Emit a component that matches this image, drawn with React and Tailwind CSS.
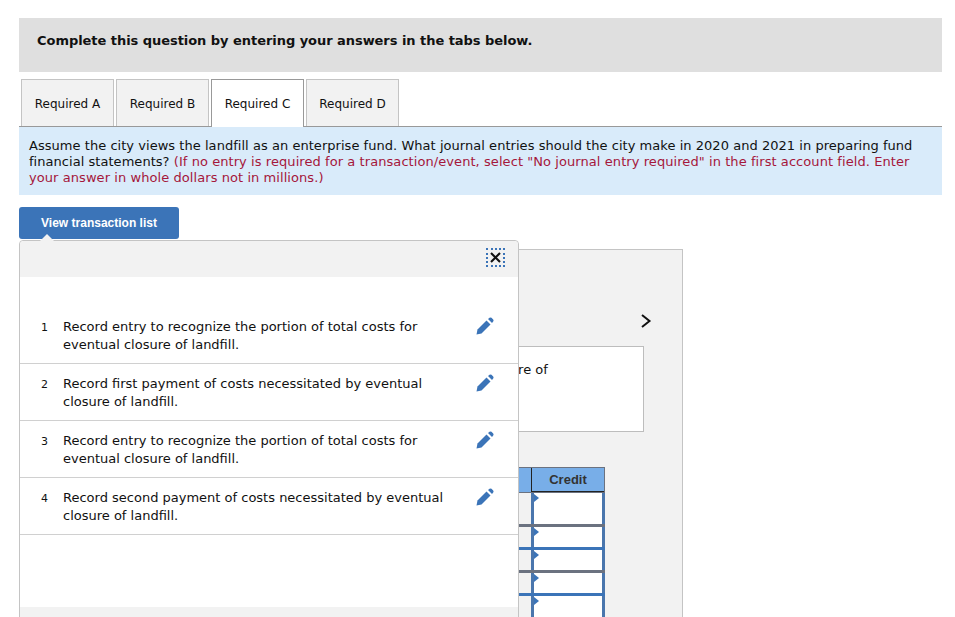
const entries = [
  { id: 1, lines: ["Record entry to recognize the portion of total costs for", "eventual closure of landfill."], h: "h-[87px] pt-[41px]" },
  { id: 2, lines: ["Record first payment of costs necessitated by eventual", "closure of landfill."], h: "h-[57px] pt-[11px]" },
  { id: 3, lines: ["Record entry to recognize the portion of total costs for", "eventual closure of landfill."], h: "h-[57px] pt-[11px]" },
  { id: 4, lines: ["Record second payment of costs necessitated by eventual", "closure of landfill."], h: "h-[57px] pt-[11px]" },
];

const tabs = ["Required A", "Required B", "Required C", "Required D"];

const rowLines = [
  "h-[34px] border-b-[3px] border-[#6b7280]",
  "h-[23px] border-b-[3px] border-[#3b74b8]",
  "h-[23px] border-b-[3px] border-[#6b7280]",
  "h-[23px] border-b-[3px] border-[#3b74b8]",
  "h-[40px]",
];

function Pencil() {
  return (
    <svg className="-mt-px ml-[1px]" width="18" height="18" viewBox="0 0 18 18" fill="#3b74b8">
      <path d="M0.5 17.5 L1.5 12.5 L10.5 3.5 L14.5 7.5 L5.5 16.5 Z" />
      <path d="M12 2 L13.5 0.8 Q14.5 0 15.5 0.8 L17.2 2.5 Q18 3.5 17.2 4.5 L16 6 Z" />
    </svg>
  );
}

function App() {
  return (
    <div className="h-[617px] w-[955px] overflow-hidden bg-white pl-[19px] pt-[18px] font-['DejaVu_Sans',sans-serif] text-[13px] text-[#111]">
      <div className="flex h-[54px] w-[923px] items-center bg-[#dfdfdf] pb-[8px] pl-[18px] font-bold tracking-[-0.045px]">
        Complete this question by entering your answers in the tabs below.
      </div>

      <div className="ml-[2px] mt-[7px] flex h-[48px] gap-[2px]">
        {tabs.map((t) => (
          <div
            key={t}
            className={
              t === "Required C"
                ? "relative z-10 flex h-[48px] w-[93px] items-center justify-center border border-b-0 border-[#999] bg-white text-[12px]"
                : "flex h-[48px] w-[93px] items-center justify-center border border-b-0 border-[#c4c4c4] bg-[#f2f2f2] text-[12px]"
            }
          >
            {t}
          </div>
        ))}
      </div>

      <div className="relative -mt-px h-[69px] w-[923px] border-t border-[#999] bg-[#d9ebfa] px-[10px] pt-[11px] leading-[16px] tracking-[0.04px]">
        Assume the city views the landfill as an enterprise fund. What journal entries should the city make in 2020 and 2021 in preparing fund financial statements?{" "}
        <span className="tracking-[0.07px] text-[#a5173b]">
          (If no entry is required for a transaction/event, select "No journal entry required" in the first account field. Enter your answer in whole dollars not in millions.)
        </span>
      </div>

      <div className="relative mt-[12px]">
        <button className="flex h-[32px] w-[160px] items-center justify-center rounded-[3px] bg-[#3b74b8] font-['Liberation_Sans',sans-serif] text-[12px] font-bold text-white">
          View transaction list
        </button>

        {/* page behind the popup */}
        <div className="mt-[10px] h-[400px] w-[664px] border border-[#c4c4c4] bg-[#f2f2f2]">
          <div className="flex h-[96px] justify-end pr-[30px] pt-[63px]">
            <svg width="12" height="16" viewBox="0 0 12 16" fill="none" stroke="#111" strokeWidth="2">
              <path d="M2 2 L9.5 8 L2 14" />
            </svg>
          </div>
          <div className="ml-[40px] h-[86px] w-[584px] whitespace-nowrap border border-[#bdbdbd] bg-white pl-[4px] pt-[13px]">
            Record entry to recognize the portion of total costs for eventual closure of
          </div>
          <div className="ml-[420px] mt-[35px] w-[165px]">
            <div className="flex h-[26px] border border-[#6b7280] bg-[#78aee8] font-['Liberation_Sans',sans-serif] text-[13px] font-bold">
              <div className="w-[91px] border-r border-[#222]"></div>
              <div className="flex flex-1 items-center justify-center border-b border-[#222] pt-px text-[#333]">Credit</div>
            </div>
            {rowLines.map((r, i) => (
              <div key={i} className={`flex ${r}`}>
                <div className="w-[91px]"></div>
                <div className="relative flex-1 border-x-[3px] border-x-[#4a76ad] bg-white">
                  <div className="absolute left-0 top-[1px] h-0 w-0 border-y-[4px] border-l-[5px] border-y-transparent border-l-[#3b74b8]"></div>
                </div>
              </div>
            ))}
          </div>
        </div>

        {/* transaction list popup */}
        <div className="absolute left-0 top-[33px] h-[400px] w-[500px] rounded-t-[4px] border border-[#c4c4c4] bg-white">
          <div className="absolute -top-[7px] left-[20px] h-0 w-0 border-x-[7px] border-b-[7px] border-x-transparent border-b-[#f2f2f2]"></div>
          <div className="flex h-[36px] justify-end rounded-t-[4px] bg-[#f2f2f2] pr-[13px] pt-[7px]">
            <div className="flex h-[19px] w-[19px] items-center justify-center border-2 border-dotted border-[#3b74b8]">
              <svg width="11" height="11" viewBox="0 0 11 11" stroke="#111" strokeWidth="2.1">
                <path d="M1 1 L10 10 M10 1 L1 10" />
              </svg>
            </div>
          </div>
          {entries.map((e) => (
            <div key={e.id} className={`flex border-b border-[#d0d0d0] pl-[21px] ${e.h}`}>
              <div className="w-[22px] pt-[1px] text-[11px] leading-[18px]">{e.id}</div>
              <div className="w-[412px] leading-[18px]">
                {e.lines.map((l) => (
                  <div key={l} className="whitespace-nowrap">{l}</div>
                ))}
              </div>
              <Pencil />
            </div>
          ))}
          <div className="h-[72px]"></div>
          <div className="h-[20px] bg-[#f2f2f2]"></div>
        </div>
      </div>
    </div>
  );
}

export default App;
